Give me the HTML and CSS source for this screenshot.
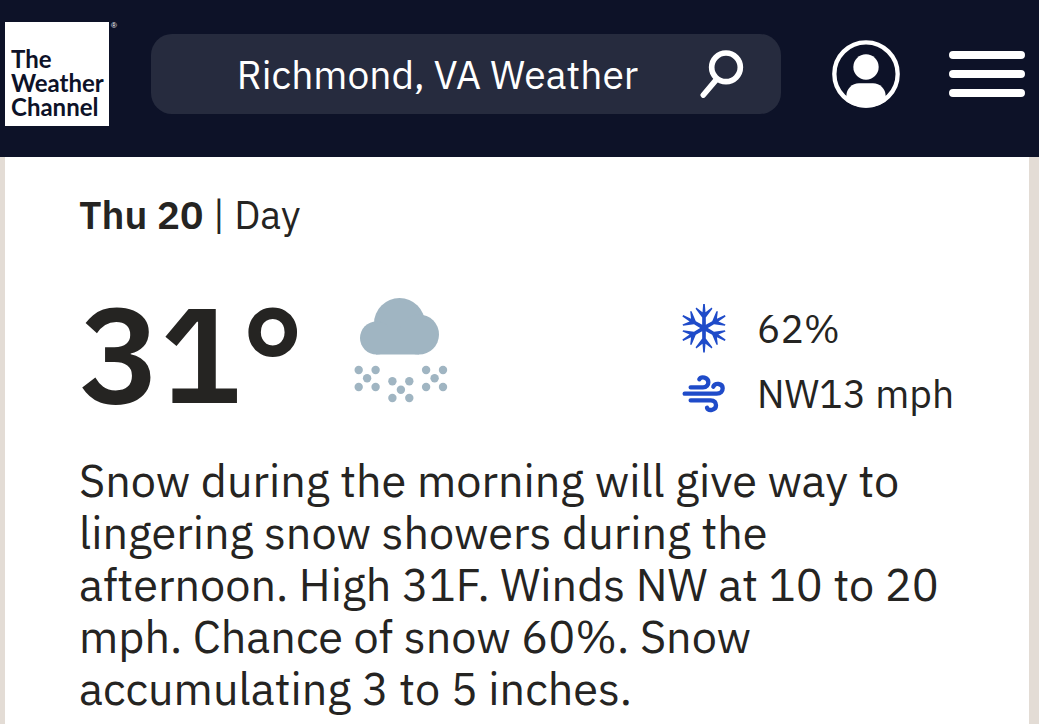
FILE: index.html
```html
<!DOCTYPE html>
<html lang="en">

<head>
    <meta charset="UTF-8">
    <meta name="viewport" content="width=device-width, initial-scale=1.0">
    <title>Richmond, VA Weather</title>
    <link rel="stylesheet" href="styles.css">
</head>

<body>

    <header class="header">
        <a class="logo" href="#">
            <span class="logo-box">The<br>Weather<br>Channel</span>
            <span class="logo-mark">®</span>
        </a>

        <form class="search" role="search">
            <input class="search-input" type="text" name="location" aria-label="Location" value="Richmond, VA Weather">
            <button class="search-button" type="submit" aria-label="Search">
                <svg width="44" height="50" viewBox="60 88 132 150" fill="none" stroke="#fff">
                    <circle cx="138" cy="143" r="43" stroke-width="17" />
                    <path d="M109 180L70 226" stroke-width="17" stroke-linecap="round" />
                </svg>
            </button>
        </form>

        <button class="icon-button account" type="button" aria-label="Account">
            <svg width="68" height="68" viewBox="0 0 204 204">
                <clipPath id="face">
                    <circle cx="102" cy="102" r="101" />
                </clipPath>
                <circle cx="102" cy="102" r="95" fill="none" stroke="#fff" stroke-width="13" />
                <circle cx="102" cy="81" r="38" fill="#fff" />
                <rect x="43" y="130" width="118" height="100" rx="38" fill="#fff" clip-path="url(#face)" />
            </svg>
        </button>

        <button class="icon-button" type="button" aria-label="Menu">
            <svg width="76" height="46" viewBox="0 0 76 46" stroke="#fff" stroke-width="8" stroke-linecap="round">
                <path d="M4 4H72M4 23H72M4 42H72" />
            </svg>
        </button>
    </header>

    <main class="card">
        <h1 class="date"><strong>Thu 20</strong> | Day</h1>

        <div class="conditions">
            <span class="temp">31°</span>

            <svg class="sky" width="96" height="106" viewBox="354 297 96 106" fill="#a0b5c2" role="img" aria-label="Snow">
                <circle cx="399.5" cy="323.5" r="25.5" />
                <circle cx="376.5" cy="338" r="16.5" />
                <circle cx="419" cy="334.5" r="20" />
                <path d="M376 330H419V354.5H376Z" />
                <!-- snow -->
                <g>
                    <circle cx="358.7" cy="370" r="4.2" />
                    <circle cx="375.6" cy="370" r="4.2" />
                    <circle cx="367.1" cy="378.3" r="4.2" />
                    <circle cx="358.7" cy="387" r="4.2" />
                    <circle cx="375.6" cy="387" r="4.2" />
                    <circle cx="392.4" cy="381.3" r="4.2" />
                    <circle cx="409.3" cy="381.3" r="4.2" />
                    <circle cx="400.9" cy="389.7" r="4.2" />
                    <circle cx="392.4" cy="398" r="4.2" />
                    <circle cx="409.3" cy="398" r="4.2" />
                    <circle cx="426.1" cy="370" r="4.2" />
                    <circle cx="443" cy="370" r="4.2" />
                    <circle cx="434.6" cy="378.3" r="4.2" />
                    <circle cx="426.1" cy="387" r="4.2" />
                    <circle cx="443" cy="387" r="4.2" />
                </g>
            </svg>

            <ul class="details">
                <li>
                    <svg width="47" height="50" viewBox="-24 -24 47 50" fill="#1f4bc9" role="img" aria-label="Chance of snow">
                        <defs>
                            <path id="arm" d="M-1.9 0L-1.8 -10.5L-8.4 -19.2L-7.7 -20.4L-1.5 -15.8L-.8 -24.5H.8L1.5 -15.8L7.7 -20.4L8.4 -19.2L1.8 -10.5L1.9 0Z" />
                        </defs>
                        <use href="#arm" />
                        <use href="#arm" transform="rotate(60)" />
                        <use href="#arm" transform="rotate(120)" />
                        <use href="#arm" transform="rotate(180)" />
                        <use href="#arm" transform="rotate(240)" />
                        <use href="#arm" transform="rotate(300)" />
                    </svg>
                    <span>62%</span>
                </li>
                <li>
                    <svg width="47" height="40" viewBox="59 250 141 120" fill="none" stroke="#1f4bc9" stroke-width="13" stroke-linecap="round" role="img" aria-label="Wind">
                        <path d="M91 290H128C139 290 144 283 144 275C144 259 122 256 117 266" />
                        <path d="M73 309H169C182 309 187 301 187 293C187 277 164 276 159 288" />
                        <path d="M91 329H151C162 329 167 336 167 344C167 360 144 362 140 351" />
                    </svg>
                    <span>NW13 mph</span>
                </li>
            </ul>
        </div>

        <p class="summary">Snow during the morning will give way to lingering snow showers during the afternoon. High 31F. Winds NW at 10 to 20 mph. Chance of snow 60%. Snow accumulating 3 to 5 inches.</p>
    </main>

</body>

</html>
```
FILE: styles.css
```css
* {
    margin: 0;
    padding: 0;
    box-sizing: border-box;
}

body {
    min-height: 100vh;
    display: flex;
    flex-direction: column;
    background: #e3dcd5;
    color: #252422;
    font-family: "IBM Plex Sans", "Open Sans", sans-serif;
}

svg {
    display: block;
    flex: none;
}

button {
    background: none;
    border: none;
    cursor: pointer;
}

/* Header */
.header {
    display: flex;
    align-items: center;
    padding: 22px 14px 31px 5px;
    background: #0d1228;
}

.logo {
    display: flex;
    gap: 2px;
    width: 116px;
    margin-right: 30px;
    color: #fff;
    text-decoration: none;
}

.logo-box {
    flex: none;
    width: 104px;
    height: 104px;
    padding: 25px 0 0 6px;
    background: #fff;
    color: #0d1228;
    font: bold 24px/24px Lato, sans-serif;
}

.logo-mark {
    font: 8px/8px "Liberation Sans", sans-serif;
}

.search {
    flex: 1;
    min-width: 0;
    display: flex;
    align-items: center;
    height: 80px;
    padding-right: 37px;
    border-radius: 21px;
    background: #262b3e;
}

.search-input {
    flex: 1;
    min-width: 0;
    padding-left: 24px;
    border: none;
    outline: none;
    background: none;
    color: #fff;
    font: inherit;
    font-size: 39px;
    text-align: center;
}

.account {
    margin: 0 49px 0 51px;
}

/* Forecast */
.card {
    flex: 1;
    margin: 0 10px 0 5px;
    padding: 32px 73px 10px 74px;
    background: #fff;
}

.date {
    font-size: 39px;
    font-weight: 400;
    line-height: 52px;
}

.date strong {
    font-weight: 600;
}

.conditions {
    display: flex;
    align-items: flex-start;
    margin: 56px 0 34px;
}

.temp {
    width: 220px;
    font-size: 135px;
    font-weight: 600;
    line-height: 112px;
}

.sky {
    margin-left: 55px;
}

.details {
    width: 276px;
    margin-left: auto;
    padding-top: 6px;
    list-style: none;
    font-size: 39px;
    line-height: 52px;
}

.details li {
    display: flex;
    align-items: center;
    gap: 30px;
    white-space: nowrap;
}

.details li + li {
    margin-top: 13px;
}

.summary {
    font-size: 45px;
    line-height: 52px;
}
```
